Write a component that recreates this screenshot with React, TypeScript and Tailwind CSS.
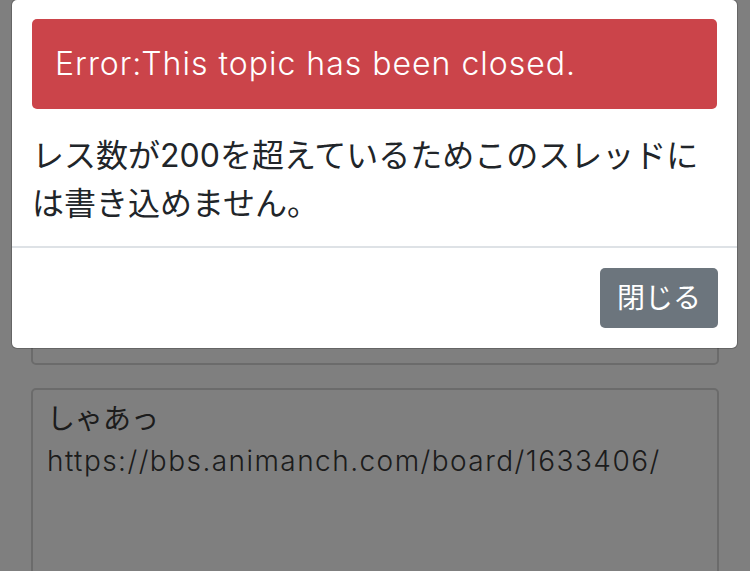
import React from "react";

const font = "font-['Inter','Noto_Sans_CJK_JP',sans-serif]";

const App = () => {
  return (
    <div className={`relative w-[750px] h-[571px] overflow-hidden bg-white ${font}`}>
      {/* Page behind the modal */}
      <div className="flex flex-col gap-[23px] px-[31px] pt-[250px]">
        <div className="h-[115px] rounded-[5px] border-2 border-[#d6d6d6] bg-white" />
        <div className="h-[300px] rounded-[5px] border-2 border-[#d6d6d6] bg-white px-[14px] pt-[8px] text-[28px] leading-[42px] text-[#383838]">
          <p>しゃあっ</p>
          <p className="font-light tracking-[1.45px]">https://bbs.animanch.com/board/1633406/</p>
        </div>
      </div>

      {/* Backdrop */}
      <div className="absolute inset-0 bg-black/50" />

      {/* Modal */}
      <div className="absolute left-[11px] right-[12px] top-[-1px] rounded-[6px] border border-black/20 bg-white bg-clip-padding">
        <div className="px-[20px] pt-[19px] pb-[18px]">
          <div className="rounded-[5px] bg-[#cb444a] px-[23px] py-[21px] text-[32px] font-light leading-[48px] tracking-[1px] text-white">
            Error:This topic has been closed.
          </div>
          <p className="mt-[23px] text-[32px] leading-[48px] text-[#212529]">
            レス数が200を超えているためこのスレッドには書き込めません。
          </p>
        </div>
        <div className="flex justify-end border-t-2 border-[#dee2e6] px-[19px] pt-[20px] pb-[20px]">
          <button
            type="button"
            className="h-[60px] rounded-[5px] bg-[#6c757d] px-[17px] text-[28px] leading-[42px] text-white"
          >
            閉じる
          </button>
        </div>
      </div>
    </div>
  );
};

export default App;
